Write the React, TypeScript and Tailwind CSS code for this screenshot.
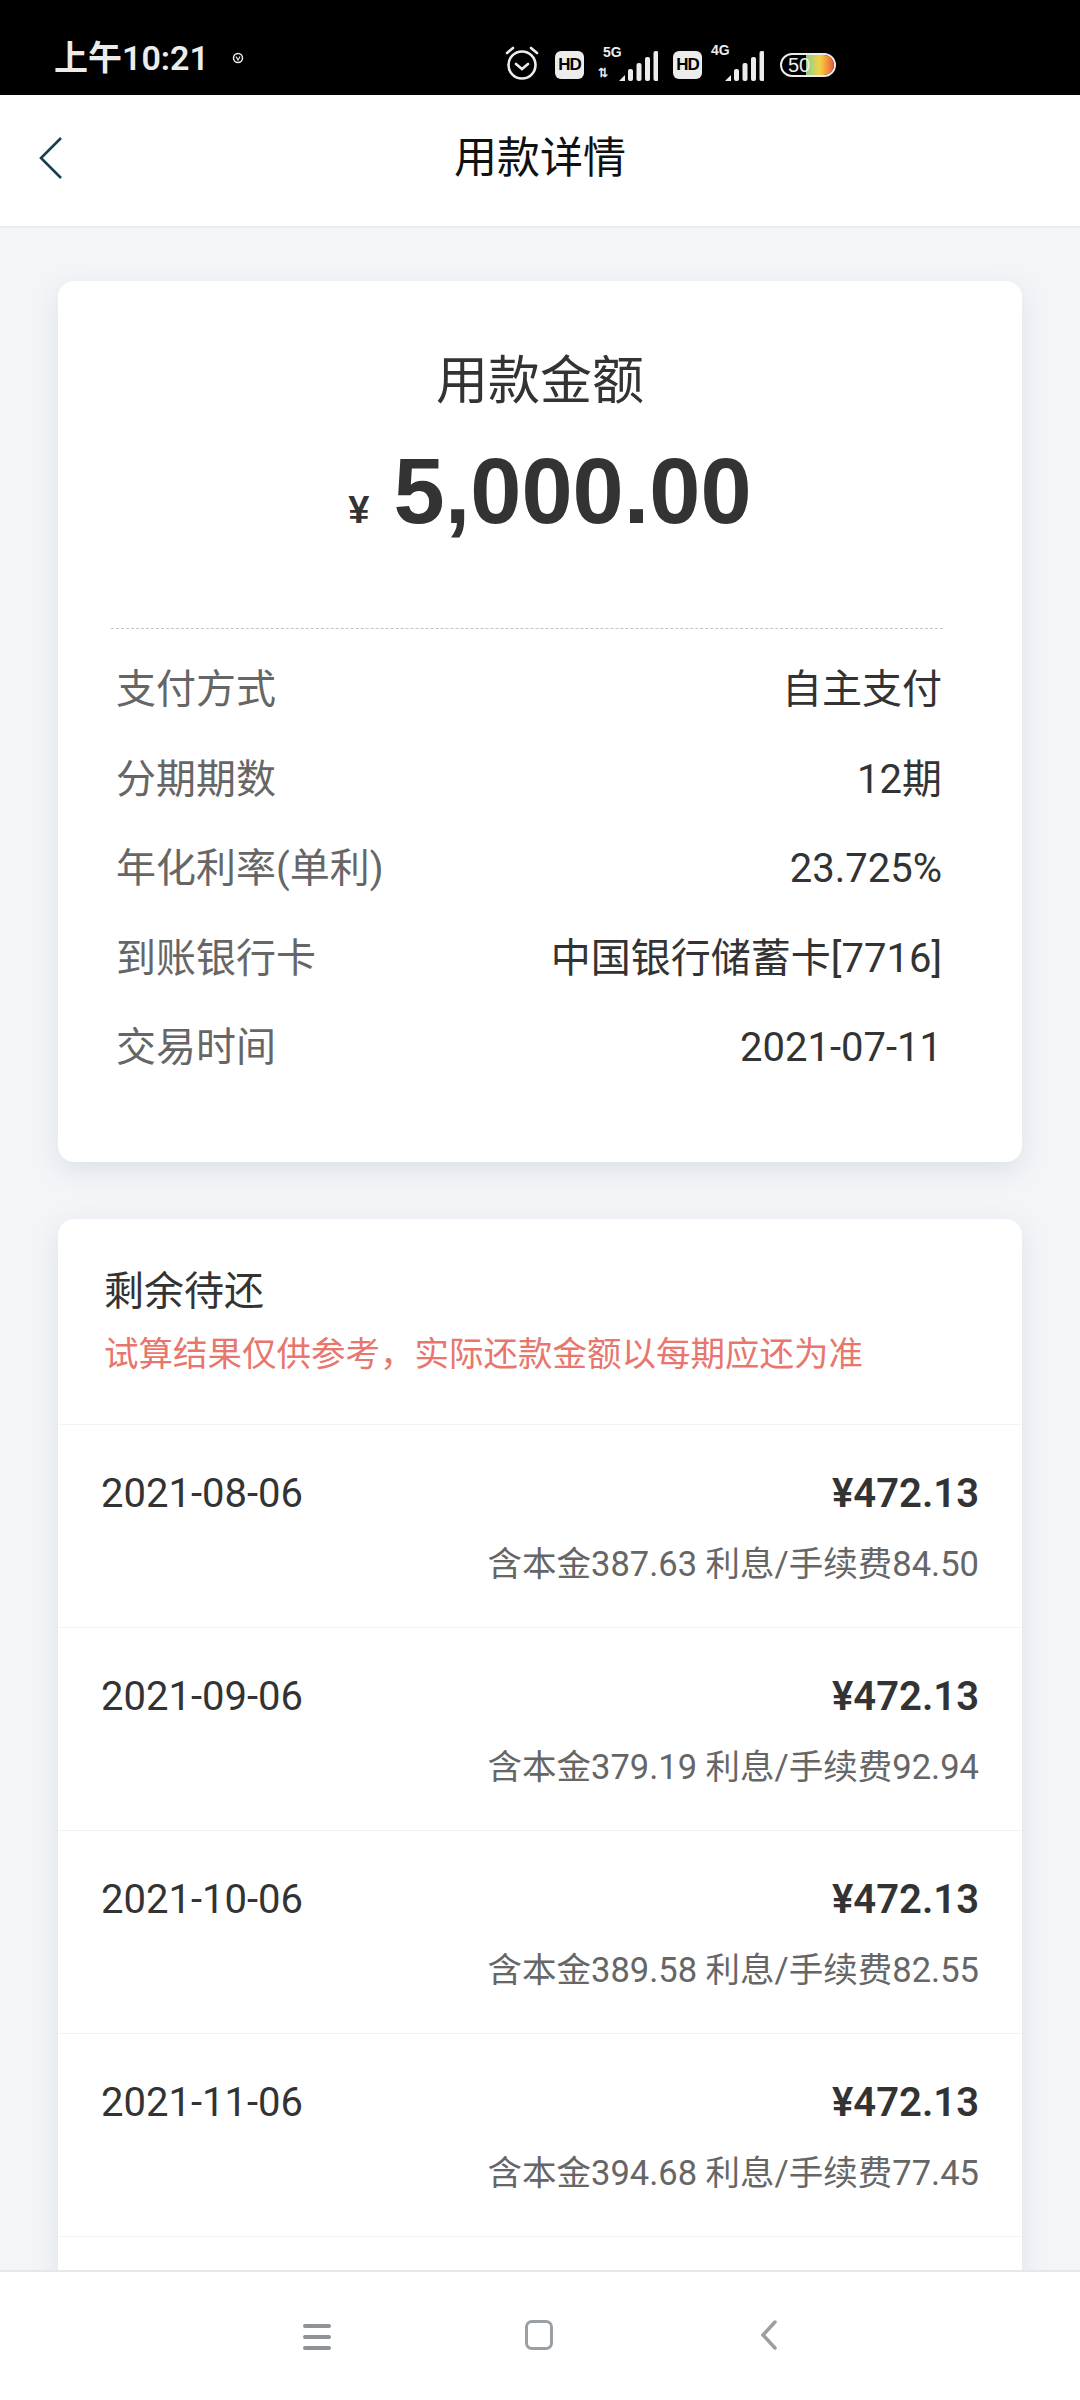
const cjk = "font-['Roboto','Noto_Sans_CJK_SC',sans-serif]";

const details = [
  ["支付方式", "自主支付"],
  ["分期期数", "12期"],
  ["年化利率(单利)", "23.725%"],
  ["到账银行卡", "中国银行储蓄卡[7716]"],
  ["交易时间", "2021-07-11"],
];

const plans = [
  ["2021-08-06", "含本金387.63 利息/手续费84.50"],
  ["2021-09-06", "含本金379.19 利息/手续费92.94"],
  ["2021-10-06", "含本金389.58 利息/手续费82.55"],
  ["2021-11-06", "含本金394.68 利息/手续费77.45"],
];

function Signal() {
  return (
    <svg width="39" height="30" viewBox="0 0 39 30" fill="#ececec">
      <path d="M0 30 6 24V30Z" />
      {[0, 1, 2, 3].map((i) => (
        <rect key={i} x={9 + i * 8.5} y={18 - i * 6} width="5" height={12 + i * 6} rx="2" />
      ))}
    </svg>
  );
}

function Hd() {
  return (
    <div className="flex h-[28px] w-[29px] items-center justify-center rounded-[6px] bg-[#ececec] font-['Liberation_Sans',sans-serif] text-[17px] font-bold tracking-[-1px] text-black">
      HD
    </div>
  );
}

function StatusBar() {
  return (
    <div className="flex h-[95px] items-end bg-black pb-[17px] pl-[54px] text-[#ececec]">
      <span className={`${cjk} w-[175px] text-[34px] leading-[40px] font-semibold`}>上午10:21</span>
      <svg width="12" height="12" viewBox="0 0 12 12" className="mb-[14px] ml-[3px]">
        <circle cx="6" cy="6" r="4.5" fill="none" stroke="#ececec" strokeWidth="1.5" />
        <path d="M4 4.5 6 8l2-3.5" fill="none" stroke="#ececec" strokeWidth="1.2" />
      </svg>
      <div className="mb-[-3px] ml-[260px] flex items-end">
        <svg width="36" height="36" viewBox="0 0 36 36" fill="none" stroke="#ececec" strokeWidth="2.6" strokeLinecap="round">
          <circle cx="18" cy="20" r="13.5" />
          <path d="M12 19l6 5 6-5M3 8l6-5M33 8l-6-5" />
        </svg>
        <div className="mb-[2px] ml-[15px]"><Hd /></div>
        <div className="relative ml-[12px] h-[30px] w-[62px]">
          <span className="absolute top-[-6px] left-[7px] font-['Liberation_Sans',sans-serif] text-[14px] leading-[14px] font-bold">5G</span>
          <span className="absolute bottom-[2px] left-[2px] font-['Liberation_Sans',sans-serif] text-[12px] leading-[12px] font-bold">⇅</span>
          <div className="absolute right-0 bottom-0"><Signal /></div>
        </div>
        <div className="mb-[2px] ml-[15px]"><Hd /></div>
        <div className="relative ml-[7px] h-[30px] w-[55px]">
          <span className="absolute top-[-8px] left-[2px] font-['Liberation_Sans',sans-serif] text-[14px] leading-[14px] font-bold">4G</span>
          <div className="absolute right-0 bottom-0"><Signal /></div>
        </div>
        <div className="relative mb-[4px] ml-[16px] h-[24px] w-[56px] overflow-hidden rounded-full border-2 border-[#ececec]">
          <div className="absolute inset-y-0 right-0 w-[28px] bg-gradient-to-r from-[#7fd08a] via-[#f4d03f] to-[#e8553a]" />
          <span className="absolute top-0 left-[6px] font-['Liberation_Sans',sans-serif] text-[20px] leading-[20px] text-[#ececec]">50</span>
        </div>
      </div>
    </div>
  );
}

function Header() {
  return (
    <div className="relative flex h-[133px] items-center justify-center border-b-2 border-[#e9ebee] bg-white pb-[5px]">
      <svg width="26" height="44" viewBox="0 0 26 44" fill="none" stroke="#173f52" strokeWidth="2.6" className="absolute top-[41px] left-[38px]">
        <path d="M23 2 3 22l20 20" />
      </svg>
      <span className={`${cjk} text-[43px] leading-[50px] text-[#111]`}>用款详情</span>
    </div>
  );
}

function SummaryCard() {
  return (
    <div className="rounded-[16px] bg-white pt-[71px] pr-[79px] pb-[94px] pl-[53px] shadow-[0_8px_24px_rgba(170,180,195,0.3)]">
      <div className={`${cjk} ml-[26px] text-center text-[52px] leading-[60px] text-[#333]`}>用款金额</div>
      <div className="mt-[34px] ml-[46px] flex items-baseline justify-center font-['Liberation_Sans',sans-serif] font-bold text-[#333]">
        <span className="mr-[24px] text-[38px] leading-[90px]">¥</span>
        <span className="text-[92px] leading-[90px]">5,000.00</span>
      </div>
      <div className="mt-[73px] border-t border-dashed border-[#c4c4c4]" />
      <div className="mt-[41px] flex flex-col gap-[49.5px] pr-[1px] pl-[5px]">
        {details.map(([label, value]) => (
          <div key={label} className={`${cjk} flex h-[40px] items-center justify-between text-[40px] leading-[40px]`}>
            <span className="text-[#666]">{label}</span>
            <span className="text-[#333]">{value}</span>
          </div>
        ))}
      </div>
    </div>
  );
}

function PlanCard() {
  return (
    <div className="mt-[57px] min-h-[1200px] rounded-t-[16px] bg-white shadow-[0_8px_24px_rgba(170,180,195,0.3)]">
      <div className="h-[205px] pt-[49px] pr-[47px] pl-[46px]">
        <div className={`${cjk} text-[40px] leading-[48px] text-[#333]`}>剩余待还</div>
        <div className={`${cjk} mt-[17px] text-[34.5px] leading-[42px] text-[#e8766c]`}>试算结果仅供参考，实际还款金额以每期应还为准</div>
      </div>
      {plans.map(([date, note]) => (
        <div key={date} className="h-[203px] border-t border-[#f2f3f5] pt-[46px] pr-[43px] pl-[43px]">
          <div className={`${cjk} flex items-center justify-between text-[#333]`}>
            <span className="text-[40px] leading-[46px]">{date}</span>
            <span className="text-[40px] leading-[46px] font-semibold">¥472.13</span>
          </div>
          <div className={`${cjk} mt-[26px] text-right text-[34.5px] leading-[42px] text-[#666]`}>{note}</div>
        </div>
      ))}
      <div className="border-t border-[#f2f3f5]" />
    </div>
  );
}

function NavBar() {
  return (
    <div className="absolute inset-x-0 bottom-0 flex h-[130px] items-start justify-center border-t-2 border-[#e6e7e9] bg-white pt-[48px]">
      <div className="mt-[4px] ml-[2px] flex w-[28px] flex-col gap-[7px]">
        <div className="h-[4px] rounded-full bg-[#8d9398]" />
        <div className="h-[4px] rounded-full bg-[#8d9398]" />
        <div className="h-[4px] rounded-full bg-[#8d9398]" />
      </div>
      <div className="ml-[194px] h-[30px] w-[28px] rounded-[7px] border-[3.5px] border-[#9a9fa3]" />
      <svg width="20" height="30" viewBox="0 0 20 30" fill="none" stroke="#9a9fa3" strokeWidth="3.5" strokeLinecap="round" className="ml-[206px]">
        <path d="M16 2 4 15l12 13" />
      </svg>
    </div>
  );
}

export default function App() {
  return (
    <div className="relative h-[2400px] w-[1080px] overflow-hidden bg-[#f3f5f8]">
      <StatusBar />
      <Header />
      <div className="px-[58px] pt-[53px]">
        <SummaryCard />
        <PlanCard />
      </div>
      <NavBar />
    </div>
  );
}
